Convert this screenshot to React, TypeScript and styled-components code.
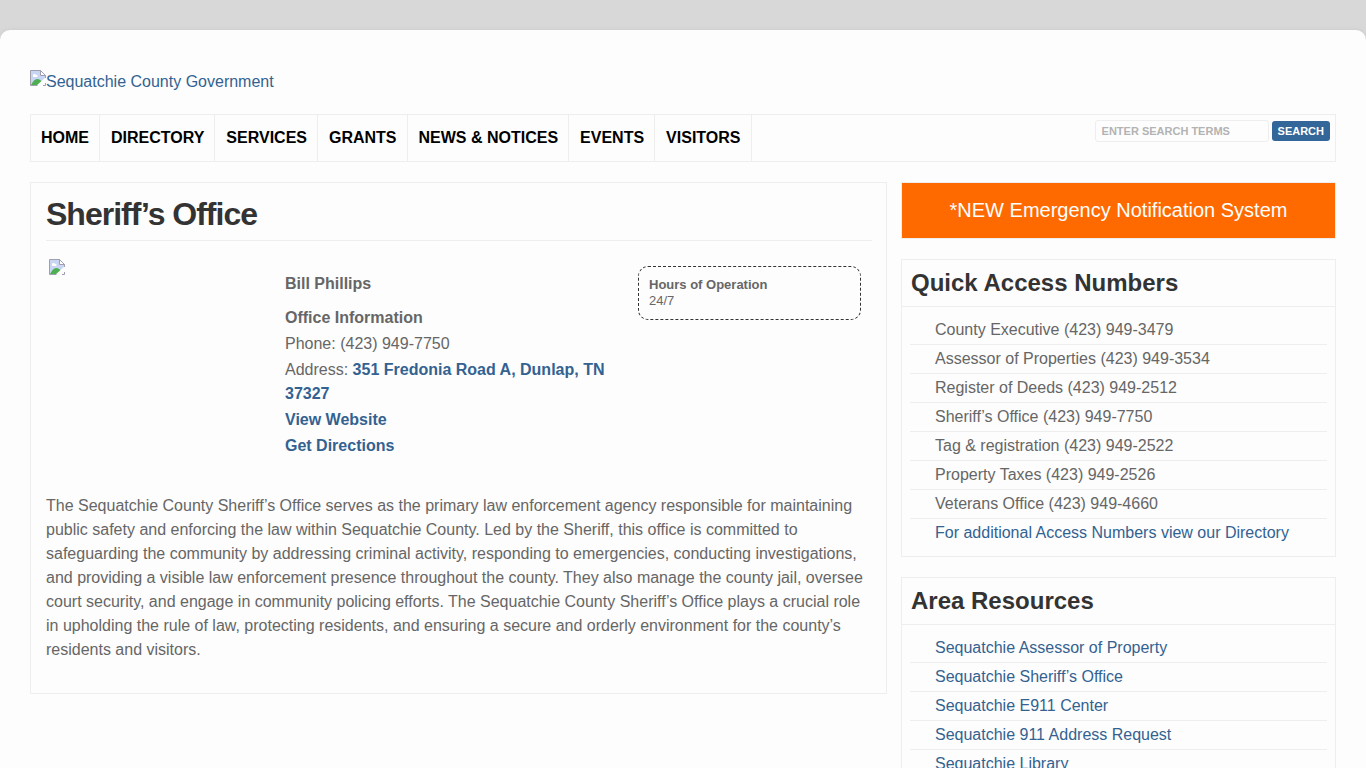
import React from "react";
import styled, { createGlobalStyle } from "styled-components";

const line = "#eeeeee";
const link = "#336291";

const GlobalStyle = createGlobalStyle`
  *, *::before, *::after { box-sizing: border-box; }
  body {
    margin: 0;
    background: #d8d8d8;
    color: #666;
    font-family: Arial, "Liberation Sans", sans-serif;
    font-size: 16px;
    line-height: 24px;
  }
  h1, h2, p, ul { margin: 0; padding: 0; }
  ul { list-style: none; }
  a { color: ${link}; text-decoration: none; }
`;

const Page = styled.div`
  margin-top: 30px;
  padding: 40px 30px 30px;
  background: #fdfdfd;
  border-radius: 10px 10px 0 0;
  box-shadow: 0 0 4px #c8c8c8;
`;

const Logo = styled.a`
  display: flex;
  align-items: flex-start;
  height: 44px;
`;

const Nav = styled.nav`
  display: flex;
  justify-content: space-between;
  min-height: 48px;
  border: 1px solid ${line};
`;

const Menu = styled.ul`
  display: flex;
`;

const MenuItem = styled.li`
  border-right: 1px solid ${line};
  & + & { padding-left: 1px; }
`;

const MenuLink = styled.a`
  display: block;
  padding: 11px 10px;
  color: #000;
  font-weight: bold;
`;

const Search = styled.form`
  display: flex;
  align-items: center;
  align-self: flex-start;
  gap: 3px;
  padding: 5px 5px 0 0;
`;

const SearchInput = styled.input`
  width: 174px;
  height: 22px;
  padding: 0 6px;
  border: 1px solid ${line};
  border-radius: 3px;
  background: transparent;
  font: bold 11px Arial, "Liberation Sans", sans-serif;
  color: #666;
  &::placeholder { color: #b3b3b3; opacity: 1; }
`;

const SearchButton = styled.button`
  height: 20px;
  padding: 0 6px;
  border: 0;
  border-radius: 3px;
  background: #336699;
  color: #fff;
  font: bold 11px Arial, "Liberation Sans", sans-serif;
`;

const Columns = styled.div`
  display: grid;
  grid-template-columns: 857fr 435fr;
  align-items: start;
  gap: 14px;
  margin-top: 20px;
`;

const Article = styled.main`
  padding: 10px 14px 31px 15px;
  border: 1px solid ${line};
`;

const Title = styled.h1`
  padding-bottom: 5px;
  border-bottom: 1px solid ${line};
  color: #333;
  font-size: 32px;
  line-height: 42px;
  letter-spacing: -1px;
`;

const Profile = styled.section`
  display: grid;
  grid-template-columns: 236px 1fr 223px;
  align-items: start;
  padding: 18px 11px 0 3px;
`;

const Details = styled.div`
  display: flex;
  flex-direction: column;
  gap: 2px;
  padding: 13px 20px 0 0;
  a { font-weight: bold; }
`;

const Name = styled.p`
  margin-bottom: 8px;
  font-weight: bold;
`;

const Hours = styled.div`
  margin-top: 7px;
  padding: 10px;
  border: 1px dashed #333;
  border-radius: 10px;
  font-size: 13px;
  line-height: 16px;
`;

const Body = styled.p`
  padding-top: 36px;
`;

const Sidebar = styled.aside`
  display: flex;
  flex-direction: column;
  gap: 20px;
`;

const Alert = styled.a`
  padding: 15px 10px 16px;
  border: 1px solid ${line};
  background: #ff6a00 padding-box;
  color: #fff;
  font-size: 20px;
  text-align: center;
`;

const Widget = styled.section`
  border: 1px solid ${line};
`;

const WidgetTitle = styled.h2`
  padding: 10px 9px;
  border-bottom: 1px solid ${line};
  color: #333;
  font-size: 24px;
  line-height: 26px;
`;

const WidgetList = styled.ul`
  padding: 9px 8px;
`;

const WidgetItem = styled.li`
  padding: 2px 10px 2px 25px;
  border-bottom: 1px solid ${line};
  &:last-child { border-bottom: 0; }
`;

function MissingImage() {
  return (
    <svg width="16" height="16" viewBox="0 0 16 16" aria-hidden="true">
      <path d="M0.5 0.5h10l5 5v10H0.5z" fill="#c9d6f3" />
      <path d="M1 15c2-4 4-6 6-6s4 1 5 3l-4 3z" fill="#4caf50" />
      <path d="M6 16 16 7v9z" fill="#fdfdfd" />
      <path d="M0.5 15.5V0.5h10l5 5V8M0.5 15.5h7M13 15.5h2.5V13" fill="none" stroke="#a09fae" />
      <path d="M10.5 0.5v5h5z" fill="#fff" stroke="#a09fae" />
      <path d="M3 6a1.500 1.500 0 0 1 3-1 1 1 0 0 1 1 2H3z" fill="#fff" />
    </svg>
  );
}

const menu = ["HOME", "DIRECTORY", "SERVICES", "GRANTS", "NEWS & NOTICES", "EVENTS", "VISITORS"];

const numbers = [
  "County Executive (423) 949-3479",
  "Assessor of Properties (423) 949-3534",
  "Register of Deeds (423) 949-2512",
  "Sheriff’s Office (423) 949-7750",
  "Tag & registration (423) 949-2522",
  "Property Taxes (423) 949-2526",
  "Veterans Office (423) 949-4660",
];

const resources = [
  "Sequatchie Assessor of Property",
  "Sequatchie Sheriff’s Office",
  "Sequatchie E911 Center",
  "Sequatchie 911 Address Request",
  "Sequatchie Library",
];

export default function App() {
  return (
    <>
      <GlobalStyle />
      <Page>
        <header>
          <Logo href="#home"><MissingImage />Sequatchie County Government</Logo>
          <Nav>
            <Menu>
              {menu.map((m) => <MenuItem key={m}><MenuLink href="#menu">{m}</MenuLink></MenuItem>)}
            </Menu>
            <Search>
              <SearchInput type="text" aria-label="Search" placeholder="ENTER SEARCH TERMS" />
              <SearchButton type="button">SEARCH</SearchButton>
            </Search>
          </Nav>
        </header>
        <Columns>
          <Article>
            <Title>Sheriff’s Office</Title>
            <Profile>
              <MissingImage />
              <Details>
                <Name>Bill Phillips</Name>
                <p><strong>Office Information</strong></p>
                <p>Phone: (423) 949-7750</p>
                <p>Address: <a href="#map">351 Fredonia Road A, Dunlap, TN 37327</a></p>
                <p><a href="#website">View Website</a></p>
                <p><a href="#directions">Get Directions</a></p>
              </Details>
              <Hours>
                <strong>Hours of Operation</strong>
                <p>24/7</p>
              </Hours>
            </Profile>
            <Body>
              The Sequatchie County Sheriff’s Office serves as the primary law enforcement agency
              responsible for maintaining public safety and enforcing the law within Sequatchie
              County. Led by the Sheriff, this office is committed to safeguarding the community by
              addressing criminal activity, responding to emergencies, conducting investigations, and
              providing a visible law enforcement presence throughout the county. They also manage
              the county jail, oversee court security, and engage in community policing efforts. The
              Sequatchie County Sheriff’s Office plays a crucial role in upholding the rule of law,
              protecting residents, and ensuring a secure and orderly environment for the county’s
              residents and visitors.
            </Body>
          </Article>
          <Sidebar>
            <Alert href="#alerts">*NEW Emergency Notification System</Alert>
            <Widget>
              <WidgetTitle>Quick Access Numbers</WidgetTitle>
              <WidgetList>
                {numbers.map((n) => <WidgetItem key={n}>{n}</WidgetItem>)}
                <WidgetItem><a href="#directory">For additional Access Numbers view our Directory</a></WidgetItem>
              </WidgetList>
            </Widget>
            <Widget>
              <WidgetTitle>Area Resources</WidgetTitle>
              <WidgetList>
                {resources.map((r) => <WidgetItem key={r}><a href="#resource">{r}</a></WidgetItem>)}
              </WidgetList>
            </Widget>
          </Sidebar>
        </Columns>
      </Page>
    </>
  );
}
